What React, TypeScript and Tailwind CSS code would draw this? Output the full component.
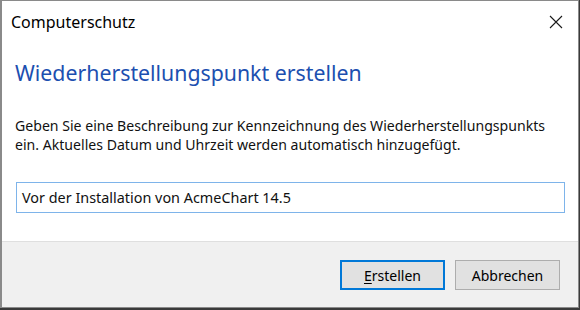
import React from 'react';

const font = { fontFamily: '"Noto Sans", "Open Sans", "Liberation Sans", sans-serif' };

function CloseIcon() {
  return (
    <svg width="14" height="14" viewBox="0 0 14 14" className="text-[#1a1a1a]">
      <path d="M1 1 L13 13 M13 1 L1 13" stroke="currentColor" strokeWidth="1.1" fill="none" />
    </svg>
  );
}

function DialogButton({ label, isDefault = false, accessKey }: { label: string; isDefault?: boolean; accessKey?: boolean }) {
  return (
    <button
      className={
        'h-[30px] w-[105px] bg-[#e1e1e1] text-[14px] text-black ' +
        (isDefault ? 'border-2 border-[#0078d7]' : 'border border-[#adadad]')
      }
    >
      {accessKey ? (
        <>
          <span className="underline underline-offset-2">{label[0]}</span>
          {label.slice(1)}
        </>
      ) : (
        label
      )}
    </button>
  );
}

export default function App() {
  return (
    <div className="h-[310px] w-[580px] bg-[#3a3a3a]" style={font}>
      <div className="flex h-[308px] w-[579px] flex-col border border-l-2 border-[#8a8a8a] bg-white">
        {/* title bar */}
        <div className="flex h-[42px] items-center justify-between pl-[9px] pr-[15px]">
          <span className="text-[16px] text-black">Computerschutz</span>
          <CloseIcon />
        </div>

        {/* content */}
        <div className="flex flex-1 flex-col px-[13px] pt-[16px]">
          <h1 className="text-[21.3px] leading-[28px] text-[#1c4fb0]">Wiederherstellungspunkt erstellen</h1>
          <p className="mt-[29px] text-[14.1px] leading-[19px] text-[#111]">
            Geben Sie eine Beschreibung zur Kennzeichnung des Wiederherstellungspunkts
            <br />
            ein. Aktuelles Datum und Uhrzeit werden automatisch hinzugefügt.
          </p>
          <div className="ml-[1px] mt-[28px] flex h-[31px] w-[549px] items-center border border-[#7eb4ea] px-[5px] text-[14.4px] text-[#111]">
            Vor der Installation von AcmeChart 14.5
          </div>
        </div>

        {/* footer */}
        <div className="flex h-[66px] items-start justify-end gap-[10px] border-t border-[#dfdfdf] bg-[#f0f0f0] pr-[18px] pt-[18px]">
          <DialogButton label="Erstellen" isDefault accessKey />
          <DialogButton label="Abbrechen" />
        </div>
      </div>
    </div>
  );
}
